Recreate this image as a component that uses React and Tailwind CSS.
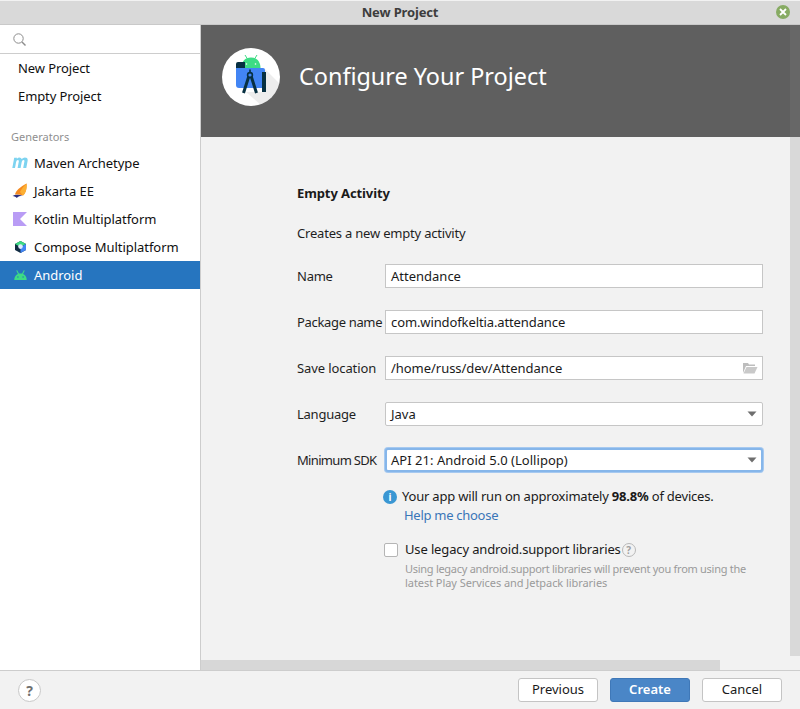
import React from "react";

const font = { fontFamily: '"Noto Sans", sans-serif' };

function MavenIcon() {
  return (
    <svg width="16" height="12" viewBox="0 0 16 12" className="shrink-0">
      <path d="M0.3 11 L2.2 0.8 H5 L4.8 2 Q6 0.6 7.5 0.6 Q9.2 0.6 9.7 2.1 Q11.2 0.6 12.8 0.6 Q16.2 0.6 15.6 4 L14.3 11 H11.2 L12.4 4.6 Q12.7 3.1 11.5 3.1 Q10.1 3.1 9.7 5 L8.6 11 H5.6 L6.8 4.6 Q7 3.1 5.9 3.1 Q4.5 3.1 4.1 5 L3 11 Z" fill="#7dd3f0" />
    </svg>
  );
}

function JakartaIcon() {
  return (
    <svg width="16" height="16" viewBox="0 0 16 16" className="shrink-0">
      <path d="M3 11.5 C3.5 8 8.5 3.5 14.5 0.5 C15 5 14 10 11 12.5 C8.5 11.5 5.5 11.2 3 11.5 Z" fill="#f58a1f" />
      <path d="M8 9 C9.5 6 12 3 14.5 0.5 C15 5 14 10 11 12.5 Z" fill="#fcb034" />
      <path d="M0.5 13 C3 11.4 6.5 11.4 10.5 12.8 C8 13 6 13.2 4.8 15 C4 14 2.5 13.4 0.5 13 Z" fill="#2b2f7f" />
    </svg>
  );
}

function KotlinIcon() {
  return (
    <svg width="14" height="14" viewBox="0 0 14 14" className="shrink-0">
      <path d="M0 0 H14 L7 7 L14 14 H0 Z" fill="#b99cf5" />
    </svg>
  );
}

function ComposeIcon() {
  return (
    <svg width="11" height="12" viewBox="0 0 11 12" className="shrink-0">
      <path d="M5.5 0 L11 3 V9 L5.5 12 L0 9 V3 Z" fill="#122c44" />
      <path d="M5.5 0 L11 3 L5.5 6 L0 3 Z" fill="#3ddc84" />
      <path d="M11 3 V9 L5.5 12 V6 Z" fill="#4285f4" />
      <circle cx="5.5" cy="5.6" r="2.3" fill="#dfeafc" />
    </svg>
  );
}

function AndroidIcon() {
  return (
    <svg width="13" height="10" viewBox="0 0 20 15" className="shrink-0">
      <path d="M0.5 15 C0.5 9 4.5 5 10 5 C15.5 5 19.5 9 19.5 15 Z" fill="#3ddc84" />
      <path d="M4.5 1 L7 6 M15.5 1 L13 6" stroke="#3ddc84" strokeWidth="1.6" strokeLinecap="round" />
      <circle cx="6" cy="10.5" r="1.1" fill="#2675bf" />
      <circle cx="14" cy="10.5" r="1.1" fill="#2675bf" />
    </svg>
  );
}

function StudioLogo() {
  return (
    <svg width="58" height="58" viewBox="0 0 58 58">
      <path d="M43 21 L58 36 V58 H40 L24 44 L43 44 Z" fill="#000" opacity="0.07" />
      <path d="M19.5 20 C19.5 13.5 23 9.5 29 9.5 C35 9.5 38.5 13.5 38.5 20 Z" fill="#3ddc84" />
      <path d="M23 7 L25.5 11 M35 7 L32.5 11" stroke="#3ddc84" strokeWidth="1" />
      <circle cx="24.5" cy="16" r="0.8" fill="#fff" />
      <circle cx="33.5" cy="16" r="0.8" fill="#fff" />
      <path d="M14 20 H41 Q43 20 43 22 V40 H17 Q14 40 14 37 Z" fill="#4285f4" />
      <path d="M14 20 V16 Q14 14 16 14 H23 V20 Z" fill="#073042" />
      <rect x="40" y="24" width="4" height="20" fill="#073042" />
      <circle cx="28" cy="27" r="2.4" fill="none" stroke="#073042" strokeWidth="1.6" />
      <path d="M28 21.5 V25" stroke="#073042" strokeWidth="1.6" />
      <path d="M26.6 29 L21.5 45 M29.4 29 L34.5 45" stroke="#073042" strokeWidth="3" />
    </svg>
  );
}

function SideItem({ icon, label, active }) {
  return (
    <div className={`flex items-center h-7 pl-[12px] text-[13px] ${active ? "bg-[#2675bf] text-white" : "text-[#101010]"}`}>
      <span className="w-4 h-4 flex items-center justify-center shrink-0">{icon}</span>
      <span className="ml-[6px] mt-[2px] whitespace-nowrap tracking-[-0.04px]">{label}</span>
    </div>
  );
}

function Caret() {
  return (
    <svg width="10" height="6" viewBox="0 0 10 6" className="shrink-0">
      <path d="M0.5 0.5 H9.5 L5 5.5 Z" fill="#6e6e6e" />
    </svg>
  );
}

function Field({ label, children, className, labelClass }) {
  return (
    <div className="flex items-center h-6">
      <div className={`w-[88px] shrink-0 mt-[2px] text-[13px] text-[#1f1f1f] whitespace-nowrap ${labelClass || "tracking-[-0.25px]"}`}>{label}</div>
      <div className={`w-[378px] h-6 flex items-center justify-between text-[13px] text-[#1a1a1a] bg-white whitespace-nowrap ${className || "border border-[#c6c6c6] pl-[5px] pr-[5px]"}`}>
        {children}
      </div>
    </div>
  );
}

function Btn({ children, primary }) {
  return (
    <button className={`w-20 h-6 rounded-[3px] text-[13px] border ${primary ? "bg-[#4a86c7] border-[#3f78b8] text-white font-semibold" : "bg-white border-[#c4c4c4] text-[#1a1a1a]"}`}>
      {children}
    </button>
  );
}

export default function App() {
  return (
    <div className="w-[800px] h-[709px] flex flex-col bg-[#f2f2f2] overflow-hidden relative" style={font}>
      <div className="h-[25px] shrink-0 bg-[#d9d9d9] border-t border-[#f2f2f2] border-b-[#c9c9c9] border-b relative flex items-center justify-center">
        <span className="text-[13px] font-bold text-[#3d3d3d] tracking-[-0.15px]">New Project</span>
        <div className="absolute right-[10px] top-[4px] w-[14px] h-[14px] rounded-full bg-[#87ab63] flex items-center justify-center">
          <svg width="8" height="8" viewBox="0 0 8 8">
            <path d="M1 1 L7 7 M7 1 L1 7" stroke="#fff" strokeWidth="1.8" />
          </svg>
        </div>
      </div>

      <div className="flex-1 flex min-h-0">
        <aside className="w-[201px] shrink-0 bg-white border-r border-[#cdcdcd] flex flex-col">
          <div className="h-[29px] shrink-0 border-b border-[#cdcdcd] flex items-center pl-[13px]">
            <svg width="13" height="13" viewBox="0 0 13 13" fill="none" stroke="#8c8c8c" strokeWidth="1">
              <circle cx="5.5" cy="5.5" r="4.7" />
              <path d="M9 9 L12.5 12.5" strokeWidth="1.4" />
            </svg>
          </div>
          <div className="h-7 flex items-center pl-[18px] pt-[2px] text-[13px] text-[#101010] tracking-[-0.1px]">New Project</div>
          <div className="h-7 flex items-center pl-[18px] pt-[2px] text-[13px] text-[#101010] tracking-[-0.1px]">Empty Project</div>
          <div className="mt-[20px] h-[14px] flex items-center pl-[11px] text-[11px] text-[#8f8f8f]">Generators</div>
          <div className="mt-[5px] flex flex-col">
            <SideItem icon={<MavenIcon />} label="Maven Archetype" />
            <SideItem icon={<JakartaIcon />} label="Jakarta EE" />
            <SideItem icon={<KotlinIcon />} label="Kotlin Multiplatform" />
            <SideItem icon={<ComposeIcon />} label="Compose Multiplatform" />
            <SideItem icon={<AndroidIcon />} label="Android" active />
          </div>
        </aside>

        <main className="flex-1 min-w-0 flex flex-col relative">
          <header className="h-[112px] shrink-0 bg-[#5f5f5f] flex items-center pl-[21px]">
            <div className="w-[58px] h-[58px] rounded-full bg-white overflow-hidden -mt-[8px]">
              <StudioLogo />
            </div>
            <h1 className="ml-[19px] -mt-[8px] text-[23.4px] text-white whitespace-nowrap">Configure Your Project</h1>
          </header>

          <div className="flex-1 min-h-0 pl-[96px]">
            <div className="mt-[48px] h-[18px] flex items-center text-[13px] font-bold text-[#1a1a1a] tracking-[-0.1px]">Empty Activity</div>
            <div className="mt-[22px] h-[18px] flex items-center text-[13px] text-[#1f1f1f] tracking-[-0.2px]">Creates a new empty activity</div>
            <div className="mt-[21px] flex flex-col gap-[22px]">
              <Field label="Name"><span className="mt-[2px]">Attendance</span></Field>
              <Field label="Package name" labelClass="tracking-[-0.33px]"><span className="mt-[2px] tracking-[-0.11px]">com.windofkeltia.attendance</span></Field>
              <Field label="Save location" labelClass="tracking-[-0.1px]">
                <span className="mt-[2px] tracking-[-0.04px]">/home/russ/dev/Attendance</span>
                <svg width="16" height="12" viewBox="0 0 16 12" className="shrink-0 -mr-[1px]">
                  <path d="M1 1 H6 L7 2.5 H13 V4 H4 L1 11 Z" fill="#bdbdbd" />
                  <path d="M4.5 5 H15.5 L12.5 11.5 H1.5 Z" fill="#c9c9c9" />
                </svg>
              </Field>
              <Field label="Language" className="border border-[#c6c6c6] rounded-[2px] pl-[5px] pr-[5px]">
                <span className="mt-[2px]">Java</span>
                <Caret />
              </Field>
              <Field label="Minimum SDK" labelClass="tracking-[-0.68px]" className="border-2 border-[#86b6ea] rounded-[3px] pl-[4px] pr-[4px] ring-1 ring-[#a6c9f0]">
                <span className="mt-[2px] tracking-[0.03px]">API 21: Android 5.0 (Lollipop)</span>
                <Caret />
              </Field>
            </div>

            <div className="mt-[16px] ml-[86px] flex items-center h-[18px] text-[13px] text-[#1a1a1a] whitespace-nowrap">
              <div className="w-[14px] h-[14px] rounded-full bg-[#3a97d3] flex items-center justify-center text-white text-[10px] font-bold leading-none shrink-0">i</div>
              <span className="ml-[5px] tracking-[-0.2px]">Your app will run on approximately <b className="font-bold">98.8%</b> of devices.</span>
            </div>
            <div className="ml-[107px] h-[18px] mt-[1px] flex items-center text-[13px] text-[#3a76b8] tracking-[-0.28px]">Help me choose</div>

            <div className="mt-[16px] ml-[87px] flex items-center h-[18px] text-[13px] text-[#1a1a1a] whitespace-nowrap">
              <div className="w-[14px] h-[14px] rounded-[2px] border border-[#b5b5b5] bg-white shrink-0" />
              <span className="ml-[7px] tracking-[-0.14px]">Use legacy android.support libraries</span>
              <div className="ml-[1px] w-[14px] h-[14px] rounded-full border border-[#b8b8b8] text-[#a0a0a0] text-[10px] font-bold flex items-center justify-center leading-none">?</div>
            </div>
            <div className="ml-[108px] mt-[3px] text-[11px] leading-[14px] text-[#9a9a9a] whitespace-nowrap">
              <div className="tracking-[-0.28px]">Using legacy android.support libraries will prevent you from using the</div>
              <div className="tracking-[-0.06px]">latest Play Services and Jetpack libraries</div>
            </div>
          </div>

          <div className="absolute right-0 top-0 w-[10px] h-[112px] bg-[#676767]" />
          <div className="absolute right-0 top-[112px] bottom-[14px] w-[10px] bg-[#d9d9d9]" />
          <div className="absolute left-0 bottom-0 h-[10px] w-[519px] bg-[#d7d7d7]" />
        </main>
      </div>

      <footer className="h-[39px] shrink-0 bg-[#f2f2f2] border-t border-[#cdcdcd] flex items-center justify-between pl-[18px] pr-[18px]">
        <div className="w-[23px] h-[23px] rounded-full bg-white border border-[#c8c8c8] flex items-center justify-center text-[14px] font-bold text-[#707070]">?</div>
        <div className="flex items-center gap-[12px]">
          <Btn>Previous</Btn>
          <Btn primary>Create</Btn>
          <Btn>Cancel</Btn>
        </div>
      </footer>
    </div>
  );
}
